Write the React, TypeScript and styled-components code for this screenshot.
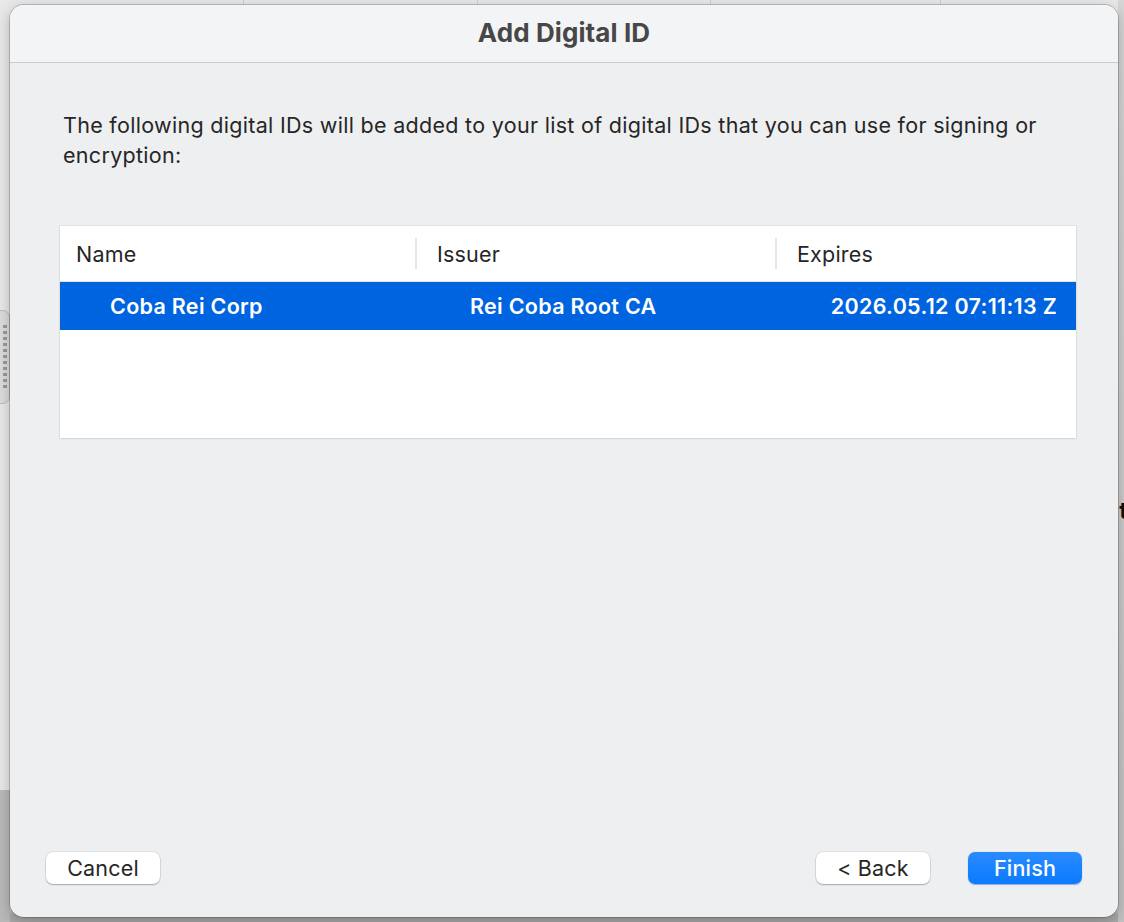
import React from 'react';
import styled, { createGlobalStyle } from 'styled-components';

const GlobalStyle = createGlobalStyle`
  html, body {
    margin: 0;
    padding: 0;
  }
  body {
    font-family: Inter, "Noto Sans", "Liberation Sans", sans-serif;
    -webkit-font-smoothing: antialiased;
  }
`;

// the window that sits behind the sheet: only its edges show
const Screen = styled.div`
  position: relative;
  width: 1124px;
  height: 922px;
  overflow: hidden;
  box-sizing: border-box;
  padding: 5px 6px 5px 10px;
  display: flex;
  background:
    linear-gradient(to bottom, transparent 0, transparent 790px, #b9b9b9 790px) left / 10px 100% no-repeat,
    linear-gradient(to bottom, #d6d6d6 0, #c2c2c2 100%) right / 6px 100% no-repeat,
    linear-gradient(to right,
      transparent 243px, #cfcfcf 243px, #cfcfcf 244px, transparent 244px,
      transparent 477px, #cfcfcf 477px, #cfcfcf 478px, transparent 478px,
      transparent 710px, #cfcfcf 710px, #cfcfcf 711px, transparent 711px,
      transparent 940px, #cfcfcf 940px, #cfcfcf 941px, transparent 941px) top / 100% 6px no-repeat,
    linear-gradient(to bottom, #e8e8e8 0, #e8e8e8 905px, #a9a9a9 915px);
`;

const ScrollGrip = styled.div`
  position: absolute;
  left: -6px;
  top: 310px;
  width: 14px;
  height: 92px;
  border-radius: 7px;
  border: 1px solid #bdbdbd;
  background: repeating-linear-gradient(to bottom, #9a9a9a 0, #9a9a9a 3px, transparent 3px, transparent 6px) 8px 14px / 4px 64px no-repeat,
    #dcdcdc;
`;

const Glyph = styled.span`
  position: absolute;
  right: -4px;
  top: 496px;
  font-size: 24px;
  font-weight: 700;
  color: #111;
`;

const Dialog = styled.div`
  position: relative;
  z-index: 1;
  flex: 1;
  display: flex;
  flex-direction: column;
  border-radius: 14px;
  background: #eeeff0;
  box-shadow: 0 0 0 1px rgba(0, 0, 0, 0.18), 0 4px 14px rgba(0, 0, 0, 0.25);
  overflow: hidden;
`;

const TitleBar = styled.div`
  height: 57px;
  flex: none;
  display: flex;
  align-items: center;
  justify-content: center;
  background: #f3f4f5;
  border-bottom: 1px solid #cdcdcd;
`;

const Title = styled.h1`
  margin: 0 0 2px;
  font-size: 26px;
  font-weight: 700;
  color: #474747;
  letter-spacing: 0.1px;
`;

const Body = styled.div`
  flex: 1;
  padding: 47px 42px 0 50px;
  display: flex;
  flex-direction: column;
`;

const Intro = styled.p`
  margin: 0 0 0 3px;
  font-size: 21.5px;
  line-height: 30px;
  letter-spacing: 0.3px;
  color: #262626;
`;

const Table = styled.div`
  margin-top: 56px;
  height: 212px;
  background: #fff;
  box-shadow: 0 0 0 1px rgba(0, 0, 0, 0.05), 0 1px 2px rgba(0, 0, 0, 0.08);
`;

const Row = styled.div<{ $selected?: boolean }>`
  display: grid;
  grid-template-columns: 355px 360px 1fr;
  align-items: center;
  height: ${p => (p.$selected ? '48px' : '55px')};
  background: ${p => (p.$selected ? '#0064e0' : '#fff')};
  border-bottom: ${p => (p.$selected ? 'none' : '1px solid #e4e4e4')};
`;

const HeadCell = styled.div<{ $first?: boolean }>`
  height: 31px;
  display: flex;
  align-items: center;
  padding-left: ${p => (p.$first ? '16px' : '20px')};
  border-left: ${p => (p.$first ? 'none' : '2px solid #e6e6e6')};
  font-size: 21.5px;
  letter-spacing: 0.2px;
  color: #262626;
`;

const Cell = styled.div<{ $indent: number; $right?: boolean }>`
  padding-left: ${p => p.$indent}px;
  padding-right: ${p => (p.$right ? '19px' : '0')};
  text-align: ${p => (p.$right ? 'right' : 'left')};
  font-size: 21.5px;
  font-weight: 600;
  letter-spacing: 0.3px;
  color: #fff;
  white-space: nowrap;
`;

const Footer = styled.div`
  display: flex;
  align-items: center;
  padding: 0 36px 33px 36px;
`;

const Spacer = styled.div`
  flex: 1;
`;

const Button = styled.button<{ $primary?: boolean }>`
  width: 114px;
  height: 32px;
  border: none;
  border-radius: 7px;
  font-family: inherit;
  font-size: 21.5px;
  letter-spacing: 0.2px;
  font-weight: ${p => (p.$primary ? 500 : 400)};
  color: ${p => (p.$primary ? '#fff' : '#262626')};
  background: ${p => (p.$primary ? 'linear-gradient(to bottom, #2a8bff, #0b7bff)' : '#fff')};
  box-shadow: ${p => (p.$primary
    ? '0 0.5px 1px rgba(0, 70, 200, 0.4)'
    : '0 0 0 0.5px rgba(0, 0, 0, 0.12), 0 1px 1.5px rgba(0, 0, 0, 0.25)')};
  padding: 0;
  margin-left: ${p => (p.$primary ? '38px' : '0')};
`;

export default function App() {
  return (
    <>
      <GlobalStyle />
      <Screen>
        <ScrollGrip />
        <Glyph>t</Glyph>
        <Dialog>
          <TitleBar>
            <Title>Add Digital ID</Title>
          </TitleBar>
          <Body>
            <Intro>
              The following digital IDs will be added to your list of digital IDs that you can use for signing or
              encryption:
            </Intro>
            <Table>
              <Row>
                <HeadCell $first>Name</HeadCell>
                <HeadCell>Issuer</HeadCell>
                <HeadCell>Expires</HeadCell>
              </Row>
              <Row $selected>
                <Cell $indent={50}>Coba Rei Corp</Cell>
                <Cell $indent={55}>Rei Coba Root CA</Cell>
                <Cell $indent={0} $right>2026.05.12 07:11:13 Z</Cell>
              </Row>
            </Table>
          </Body>
          <Footer>
            <Button>Cancel</Button>
            <Spacer />
            <Button>&lt; Back</Button>
            <Button $primary>Finish</Button>
          </Footer>
        </Dialog>
      </Screen>
    </>
  );
}
